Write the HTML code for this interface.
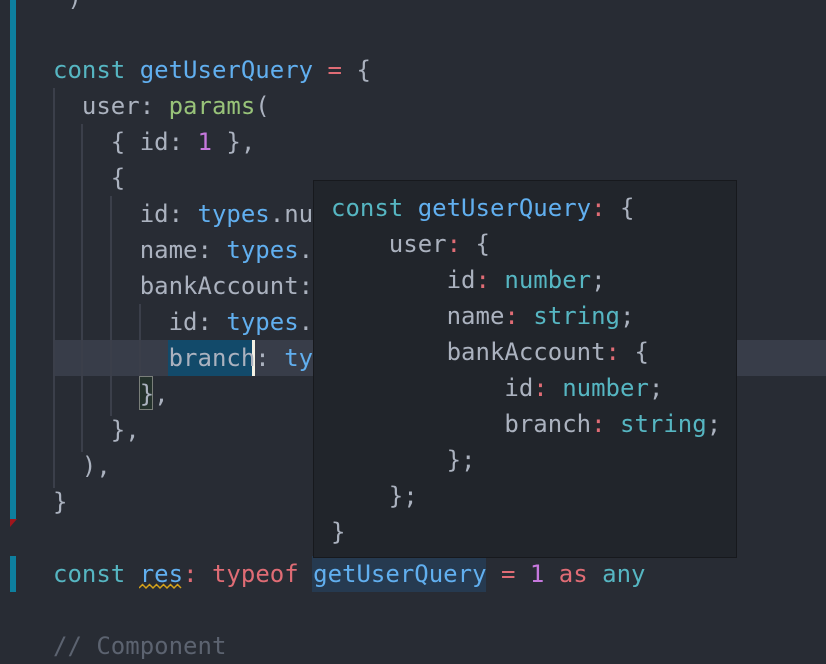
<!DOCTYPE html>
<html><head><meta charset="utf-8">
<style>
html,body{margin:0;padding:0}
body{width:826px;height:652px;overflow:hidden;background:#282c34;position:relative;font-family:"DejaVu Sans Mono","Liberation Mono",monospace;font-size:24px;color:#abb2bf}
.l{position:absolute;left:53px;height:36px;line-height:36px;white-space:pre}
.k{color:#56b6c2}.f{color:#61afef}.g{color:#98c379}.n{color:#c678dd}.r{color:#e06c75}.c{color:#5c6370}
.abs{position:absolute}
.guide{position:absolute;width:2px;background:#3b3f4a}
#pop{position:absolute;left:313px;top:180px;width:422px;height:376px;background:#21252b;border:1px solid #17191d}
#pop .l{left:17px}
</style></head><body>
<div class="abs" style="left:53px;top:340px;width:773px;height:36px;background:#383d49"></div>
<div class="abs" style="left:168px;top:340px;width:85px;height:36px;background:#124a6a"></div>
<div class="abs" style="left:252px;top:340px;width:3px;height:36px;background:#f4f1e4"></div>
<div class="abs" style="left:312px;top:556px;width:174px;height:36px;background:#263a50"></div>
<div class="abs" style="left:139px;top:376px;width:14px;height:34px;border:1px solid #7a7f7a;background:#24322c;box-sizing:border-box"></div>
<div class="abs" style="left:10px;top:0;width:6px;height:519px;background:#0e7f9e"></div>
<div class="abs" style="left:10px;top:519px;width:0;height:0;border-left:7px solid #a0161c;border-bottom:8px solid transparent"></div>
<div class="abs" style="left:10px;top:556px;width:6px;height:36px;background:#0e7f9e"></div>
<div class="guide" style="left:53px;top:88px;height:400px"></div>
<div class="guide" style="left:81px;top:124px;height:328px"></div>
<div class="guide" style="left:110px;top:196px;height:220px"></div>
<div class="guide" style="left:139px;top:304px;height:72px"></div>

<div class="l" style="top:-20px"> )</div>
<div class="l" style="top:52px"><span class="k">const</span> <span class="f">getUserQuery</span> <span class="r">=</span> {</div>
<div class="l" style="top:88px">  user: <span class="g">params</span>(</div>
<div class="l" style="top:124px">    { id: <span class="n">1</span> },</div>
<div class="l" style="top:160px">    {</div>
<div class="l" style="top:196px">      id: <span class="f">types</span>.nu</div>
<div class="l" style="top:232px">      name: <span class="f">types</span>.</div>
<div class="l" style="top:268px">      bankAccount:</div>
<div class="l" style="top:304px">        id: <span class="f">types</span>.</div>
<div class="l" style="top:340px">        branch: <span class="f">ty</span></div>
<div class="l" style="top:376px">      },</div>
<div class="l" style="top:412px">    },</div>
<div class="l" style="top:448px">  ),</div>
<div class="l" style="top:484px">}</div>
<div class="l" style="top:556px"><span class="k">const</span> <span class="f">res</span><span class="r">:</span> <span class="r">typeof</span> <span class="f">getUserQuery</span> <span class="r">=</span> <span class="n">1</span> <span class="r">as</span> <span class="k">any</span></div>
<div class="l c" style="top:628px">// Component</div>
<svg class="abs" style="left:139px;top:583px" width="44" height="8"><path d="M0 5 L3.5 1.5 L7 5 L10.5 1.5 L14 5 L17.5 1.5 L21 5 L24.5 1.5 L28 5 L31.5 1.5 L35 5 L38.5 1.5 L42 5" fill="none" stroke="#d4a21a" stroke-width="1.5"/></svg>

<div id="pop">
<div class="l" style="top:9px"><span class="k">const</span> <span class="f">getUserQuery</span><span class="r">:</span> {</div>
<div class="l" style="top:45px">    user<span class="r">:</span> {</div>
<div class="l" style="top:81px">        id<span class="r">:</span> <span class="k">number</span>;</div>
<div class="l" style="top:117px">        name<span class="r">:</span> <span class="k">string</span>;</div>
<div class="l" style="top:153px">        bankAccount<span class="r">:</span> {</div>
<div class="l" style="top:189px">            id<span class="r">:</span> <span class="k">number</span>;</div>
<div class="l" style="top:225px">            branch<span class="r">:</span> <span class="k">string</span>;</div>
<div class="l" style="top:261px">        };</div>
<div class="l" style="top:297px">    };</div>
<div class="l" style="top:333px">}</div>
</div>
</body></html>
